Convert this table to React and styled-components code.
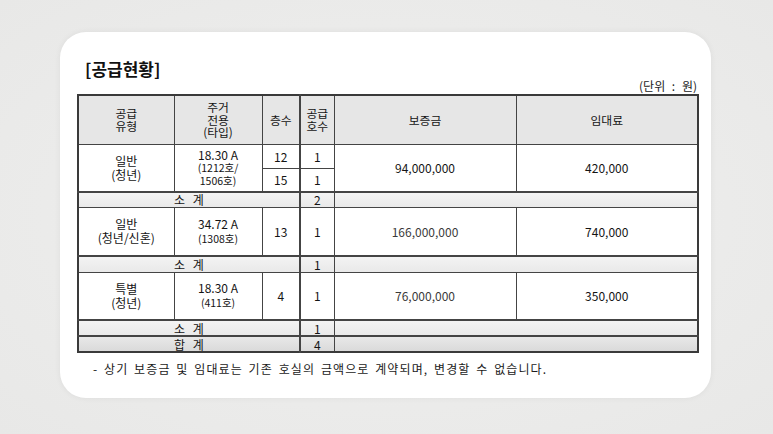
import React from "react";
import styled, { createGlobalStyle } from "styled-components";

const Global = createGlobalStyle`
  html, body { margin: 0; padding: 0; background: #ebebea; }
  body { font-family: "Noto Sans CJK KR", "Noto Sans", sans-serif; color: #1a1a1a; }
`;

const Page = styled.div`
  width: 773px;
  height: 434px;
  box-sizing: border-box;
  padding: 32px 0 0 60px;
  background: radial-gradient(ellipse at center, #f0f0ef 0%, #e8e8e7 100%);
`;

const Card = styled.div`
  width: 651px;
  height: 366px;
  box-sizing: border-box;
  background: #fff;
  border-radius: 26px;
  box-shadow: 0 0 6px rgba(0, 0, 0, 0.06);
  padding: 26px 0 0 17px;
`;

const Head = styled.div`
  width: 620px;
  height: 36px;
  display: flex;
  justify-content: space-between;
`;

const Title = styled.div`
  align-self: flex-start;
  margin-left: 8px;
  font-size: 17px;
  font-weight: 700;
  line-height: 22px;
  color: #111;
`;

const Unit = styled.div`
  align-self: flex-end;
  font-size: 12px;
  line-height: 14px;
  padding-bottom: 1px;
  color: #222;
  word-spacing: 4px;
`;

const Table = styled.table`
  width: 620px;
  table-layout: fixed;
  border-collapse: collapse;
  border: 2px solid #3a3a3a;
`;

const Row = styled.tr`
  height: ${(p) => p.$h}px;
  background: ${(p) =>
    p.$kind === "sub"
      ? "linear-gradient(#f4f4f4, #e9e9e9)"
      : p.$kind === "total"
      ? "linear-gradient(#e9e9e9, #d9d9d9)"
      : p.$kind === "head"
      ? "#e6e6e6"
      : "#fff"};
  & > td, & > th {
    border-top-width: ${(p) => (p.$kind === "sub" || p.$kind === "total" ? 2 : 1)}px;
  }
`;

const Cell = styled.td`
  border: 1px solid #444;
  padding: 0;
  text-align: center;
  vertical-align: middle;
  font-size: 12px;
  line-height: ${(p) => p.$lh || 13}px;
  font-weight: 400;
  color: ${(p) => p.$color || "#141414"};
  border-left-width: ${(p) => (p.$thick ? 2 : 1)}px;
  word-spacing: ${(p) => (p.$spaced ? "5px" : "0")};
`;

const HeadCell = styled(Cell).attrs({ as: "th" })`
  font-size: 11.8px;
  line-height: 12.5px;
`;

const Small = styled.span`
  display: block;
  font-size: 10.5px;
  line-height: ${(p) => p.$lh || 12}px;
`;

const Line = styled.span`
  display: block;
`;

const Note = styled.div`
  margin: 8px 0 0 16px;
  font-size: 12px;
  line-height: 16px;
  letter-spacing: 1.1px;
  word-spacing: 2px;
  color: #1a1a1a;
`;

const lines = (arr) => arr.map((t, i) => <Line key={i}>{t}</Line>);

export default function App() {
  return (
    <>
      <Global />
      <Page>
        <Card>
          <Head>
            <Title>[공급현황]</Title>
            <Unit>(단위 : 원)</Unit>
          </Head>
          <Table>
            <colgroup>
              <col style={{ width: 96 }} />
              <col style={{ width: 88 }} />
              <col style={{ width: 38 }} />
              <col style={{ width: 34 }} />
              <col style={{ width: 182 }} />
              <col style={{ width: 182 }} />
            </colgroup>
            <tbody>
              <Row $h={49} $kind="head">
                <HeadCell>{lines(["공급", "유형"])}</HeadCell>
                <HeadCell>{lines(["주거", "전용", "(타입)"])}</HeadCell>
                <HeadCell>층수</HeadCell>
                <HeadCell $thick>{lines(["공급", "호수"])}</HeadCell>
                <HeadCell>보증금</HeadCell>
                <HeadCell>임대료</HeadCell>
              </Row>
              <Row $h={24}>
                <Cell rowSpan={2} $lh={13.5}>{lines(["일반", "(청년)"])}</Cell>
                <Cell rowSpan={2} $lh={12}>
                  <Line>18.30 A</Line>
                  <Small $lh={14}>(1212호/</Small>
                  <Small>1506호)</Small>
                </Cell>
                <Cell>12</Cell>
                <Cell $thick>1</Cell>
                <Cell rowSpan={2}>94,000,000</Cell>
                <Cell rowSpan={2}>420,000</Cell>
              </Row>
              <Row $h={24}>
                <Cell>15</Cell>
                <Cell $thick>1</Cell>
              </Row>
              <Row $h={15} $kind="sub">
                <Cell colSpan={3} $spaced>소 계</Cell>
                <Cell $thick>2</Cell>
                <Cell colSpan={2} />
              </Row>
              <Row $h={49}>
                <Cell $lh={14}>{lines(["일반", "(청년/신혼)"])}</Cell>
                <Cell $lh={14}>
                  <Line>34.72 A</Line>
                  <Small $lh={15}>(1308호)</Small>
                </Cell>
                <Cell>13</Cell>
                <Cell $thick>1</Cell>
                <Cell $color="#3a3a3a">166,000,000</Cell>
                <Cell>740,000</Cell>
              </Row>
              <Row $h={16} $kind="sub">
                <Cell colSpan={3} $spaced>소 계</Cell>
                <Cell $thick>1</Cell>
                <Cell colSpan={2} />
              </Row>
              <Row $h={48}>
                <Cell $lh={14}>{lines(["특별", "(청년)"])}</Cell>
                <Cell $lh={14}>
                  <Line>18.30 A</Line>
                  <Small $lh={15}>(411호)</Small>
                </Cell>
                <Cell>4</Cell>
                <Cell $thick>1</Cell>
                <Cell $color="#3a3a3a">76,000,000</Cell>
                <Cell>350,000</Cell>
              </Row>
              <Row $h={16} $kind="sub">
                <Cell colSpan={3} $spaced>소 계</Cell>
                <Cell $thick>1</Cell>
                <Cell colSpan={2} />
              </Row>
              <Row $h={16} $kind="total">
                <Cell colSpan={3} $spaced>합 계</Cell>
                <Cell $thick>4</Cell>
                <Cell colSpan={2} />
              </Row>
            </tbody>
          </Table>
          <Note>- 상기 보증금 및 임대료는 기존 호실의 금액으로 계약되며, 변경할 수 없습니다.</Note>
        </Card>
      </Page>
    </>
  );
}
